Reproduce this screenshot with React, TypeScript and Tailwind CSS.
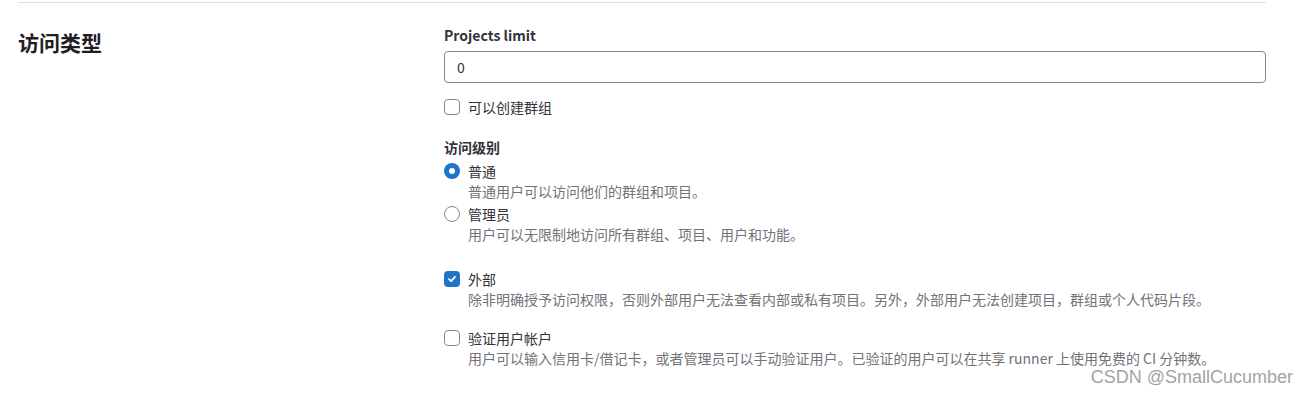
import React, { useState } from 'react';

const FONT = { fontFamily: '"Noto Sans CJK SC", "Noto Sans", sans-serif' };

type BoxProps = { checked: boolean; onChange: () => void };

const CheckBox: React.FC<BoxProps> = ({ checked, onChange }) => (
  <button
    type="button"
    onClick={onChange}
    className={
      checked
        ? 'flex h-4 w-4 items-center justify-center rounded-[4px] bg-[#1f75cb]'
        : 'flex h-4 w-4 items-center justify-center rounded-[4px] border border-[#89888d] bg-white'
    }
  >
    {checked && (
      <svg width="10" height="10" viewBox="0 0 10 10" fill="none">
        <path d="M2 5.2 4.1 7.2 8 2.9" stroke="white" strokeWidth="1.8" strokeLinecap="round" strokeLinejoin="round" />
      </svg>
    )}
  </button>
);

const Radio: React.FC<BoxProps> = ({ checked, onChange }) => (
  <button
    type="button"
    onClick={onChange}
    className={
      checked
        ? 'flex h-4 w-4 items-center justify-center rounded-full bg-[#1f75cb]'
        : 'flex h-4 w-4 items-center justify-center rounded-full border border-[#89888d] bg-white'
    }
  >
    {checked && <span className="h-[6px] w-[6px] rounded-full bg-white" />}
  </button>
);

const Option: React.FC<{
  control: React.ReactNode;
  label: string;
  help?: string;
  className?: string;
}> = ({ control, label, help, className }) => (
  <div className={`relative pl-6 ${className ?? ''}`}>
    <div className="absolute left-0 top-[2px]">{control}</div>
    <div className="text-sm leading-5 text-[#333238]">{label}</div>
    {help && <div className="text-sm leading-5 text-[#737278]">{help}</div>}
  </div>
);

const App: React.FC = () => {
  const [limit, setLimit] = useState('0');
  const [canCreateGroup, setCanCreateGroup] = useState(false);
  const [level, setLevel] = useState<'regular' | 'admin'>('regular');
  const [external, setExternal] = useState(true);
  const [verified, setVerified] = useState(false);

  return (
    <div className="relative h-[393px] w-[1309px] overflow-hidden bg-white" style={FONT}>
      <div className="ml-[18px] mt-[2px] w-[1248px] border-t border-[#dcdcde]">
        <div className="flex pt-[22px]">
          {/* 左侧标题 */}
          <div className="w-[426px] shrink-0">
            <h2 className="mt-[3px] text-[21px] font-bold leading-7 text-[#1f1e24]">访问类型</h2>
          </div>

          {/* 右侧表单 */}
          <div className="flex-1">
            <label className="block text-sm font-semibold leading-5 text-[#333238]">Projects limit</label>
            <input
              type="text"
              value={limit}
              onChange={(e) => setLimit(e.target.value)}
              className="mt-[6px] h-8 w-full rounded-[4px] border border-[#89888d] px-3 text-sm text-[#333238] outline-none"
            />

            <Option
              className="mt-[14px]"
              control={<CheckBox checked={canCreateGroup} onChange={() => setCanCreateGroup(!canCreateGroup)} />}
              label="可以创建群组"
            />

            <div className="mt-5 text-sm font-semibold leading-5 text-[#333238]">访问级别</div>
            <Option
              className="mt-1"
              control={<Radio checked={level === 'regular'} onChange={() => setLevel('regular')} />}
              label="普通"
              help="普通用户可以访问他们的群组和项目。"
            />
            <Option
              className="mt-[3px]"
              control={<Radio checked={level === 'admin'} onChange={() => setLevel('admin')} />}
              label="管理员"
              help="用户可以无限制地访问所有群组、项目、用户和功能。"
            />

            <Option
              className="mt-[25px]"
              control={<CheckBox checked={external} onChange={() => setExternal(!external)} />}
              label="外部"
              help="除非明确授予访问权限，否则外部用户无法查看内部或私有项目。另外，外部用户无法创建项目，群组或个人代码片段。"
            />
            <Option
              className="mt-[19px]"
              control={<CheckBox checked={verified} onChange={() => setVerified(!verified)} />}
              label="验证用户帐户"
              help="用户可以输入信用卡/借记卡，或者管理员可以手动验证用户。已验证的用户可以在共享 runner 上使用免费的 CI 分钟数。"
            />
          </div>
        </div>
      </div>

      <div
        className="absolute bottom-[6px] right-[16px] text-[18px] leading-5 text-[#a3a3a3]"
        style={{ fontFamily: '"Liberation Sans", Arial, sans-serif' }}
      >
        CSDN @SmallCucumber
      </div>
    </div>
  );
};

export default App;
